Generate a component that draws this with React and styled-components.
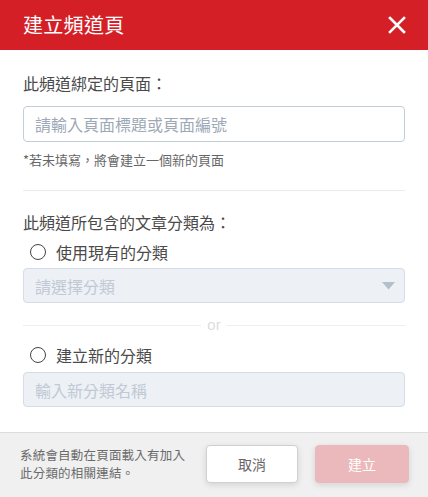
import React from "react";
import styled, { createGlobalStyle } from "styled-components";

const Global = createGlobalStyle`
  html, body { margin: 0; padding: 0; background: #ffffff; }
  body { font-family: "Noto Sans CJK TC", "Noto Sans", sans-serif; }
  * { box-sizing: border-box; }
`;

const Dialog = styled.div`
  width: 428px;
  height: 497px;
  display: flex;
  flex-direction: column;
  background: #fff;
  overflow: hidden;
`;

const Header = styled.div`
  height: 50px;
  flex: none;
  background: #d51f27;
  display: flex;
  align-items: center;
  justify-content: space-between;
  padding: 0 22px 0 23px;
`;

const Title = styled.h1`
  margin: 0;
  font-size: 20px;
  font-weight: 400;
  line-height: 28px;
  color: #fff;
  letter-spacing: 0.3px;
`;

const CloseBtn = styled.button`
  border: 0;
  background: none;
  padding: 0;
  width: 19px;
  height: 19px;
  display: flex;
  align-items: center;
  justify-content: center;
  cursor: pointer;
`;

const Body = styled.div`
  flex: 1;
  padding: 21px 23px 0 23px;
  display: flex;
  flex-direction: column;
`;

const Label = styled.div`
  font-size: 16px;
  line-height: 24px;
  color: #4a4a4a;
  margin-top: ${(p) => p.$mt || 0}px;
`;

const Field = styled.div`
  height: ${(p) => p.$h || 36}px;
  margin-top: ${(p) => p.$mt || 0}px;
  border: 1px solid ${(p) => (p.$disabled ? "#d5dde7" : "#c3cedb")};
  background: ${(p) => (p.$disabled ? "#edf1f6" : "#fff")};
  border-radius: 4px;
  display: flex;
  align-items: center;
  justify-content: space-between;
  padding: 0 9px 0 11px;
`;

const Placeholder = styled.span`
  font-size: 16px;
  line-height: 22px;
  color: ${(p) => (p.$disabled ? "#c0c9d4" : "#9ea9b8")};
`;

const Hint = styled.div`
  margin-top: 9px;
  font-size: 13px;
  line-height: 18px;
  color: #666;
`;

const Divider = styled.div`
  margin-top: 21px;
  height: 1px;
  background: #ececec;
`;

const RadioRow = styled.label`
  margin-top: ${(p) => p.$mt || 0}px;
  height: 24px;
  display: flex;
  align-items: center;
  gap: 10px;
  padding-left: 7px;
  font-size: 16px;
  color: #4a4a4a;
`;

const RadioCircle = styled.span`
  width: 16px;
  height: 16px;
  border: 1.3px solid #444;
  border-radius: 50%;
  flex: none;
`;

const OrRow = styled.div`
  margin-top: 13px;
  height: 18px;
  display: flex;
  align-items: center;
  gap: 5px;
  &::before, &::after {
    content: "";
    flex: 1;
    height: 1px;
    background: #eeeeee;
  }
`;

const OrText = styled.span`
  font-family: "Liberation Sans", Arial, sans-serif;
  font-size: 15px;
  line-height: 18px;
  color: #dddddd;
  padding: 0 1px;
`;

const Footer = styled.div`
  height: 65px;
  flex: none;
  background: #f0f0f0;
  border-top: 1px solid #dcdcdc;
  display: flex;
  align-items: center;
  padding: 0 19px 3px 20px;
`;

const FooterText = styled.div`
  width: 172px;
  font-size: 12.5px;
  line-height: 17.5px;
  color: #6a6a6a;
  letter-spacing: 0.2px;
`;

const Button = styled.button`
  height: 38px;
  width: ${(p) => p.$w}px;
  margin-left: ${(p) => p.$ml}px;
  border-radius: 4px;
  font-family: inherit;
  font-size: 14px;
  border: ${(p) => (p.$primary ? "1px solid #ebb9bc" : "1px solid #d0d0d0")};
  background: ${(p) => (p.$primary ? "#ebb9bc" : "#fff")};
  color: ${(p) => (p.$primary ? "#fff" : "#666")};
  box-shadow: 0 2px 6px rgba(0, 0, 0, 0.12);
  padding: 0;
`;

export default function App() {
  return (
    <>
      <Global />
      <Dialog>
        <Header>
          <Title>建立頻道頁</Title>
          <CloseBtn aria-label="close">
            <svg width="18" height="18" viewBox="0 0 18 18">
              <path d="M2 2 L16 16 M16 2 L2 16" stroke="#fff" strokeWidth="2.6" strokeLinecap="square" />
            </svg>
          </CloseBtn>
        </Header>
        <Body>
          <Label>此頻道綁定的頁面：</Label>
          <Field $mt={11}>
            <Placeholder>請輸入頁面標題或頁面編號</Placeholder>
          </Field>
          <Hint>*若未填寫，將會建立一個新的頁面</Hint>
          <Divider />
          <Label $mt={19}>此頻道所包含的文章分類為：</Label>
          <RadioRow $mt={6}>
            <RadioCircle />
            使用現有的分類
          </RadioRow>
          <Field $mt={4} $h={35} $disabled>
            <Placeholder $disabled>請選擇分類</Placeholder>
            <svg width="13" height="8" viewBox="0 0 13 8">
              <path d="M0 0 H13 L6.5 7.5 Z" fill="#b3bfcd" />
            </svg>
          </Field>
          <OrRow>
            <OrText>or</OrText>
          </OrRow>
          <RadioRow $mt={9}>
            <RadioCircle />
            建立新的分類
          </RadioRow>
          <Field $mt={5} $h={35} $disabled>
            <Placeholder $disabled>輸入新分類名稱</Placeholder>
          </Field>
        </Body>
        <Footer>
          <FooterText>系統會自動在頁面載入有加入此分類的相關連結。</FooterText>
          <Button $w={92} $ml={14}>取消</Button>
          <Button $w={94} $ml={17} $primary>建立</Button>
        </Footer>
      </Dialog>
    </>
  );
}
